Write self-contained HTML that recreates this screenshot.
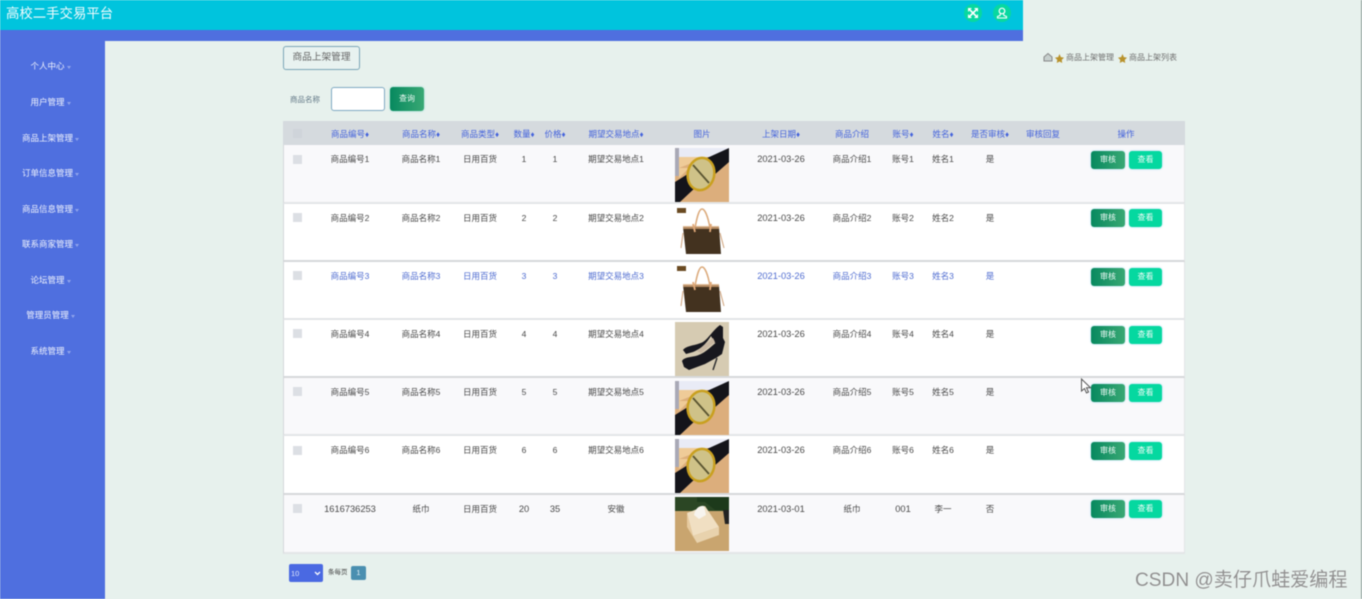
<!DOCTYPE html>
<html lang="zh"><head><meta charset="utf-8"><title>高校二手交易平台</title>
<style>
*{box-sizing:border-box;margin:0;padding:0}
html,body{width:1362px;height:599px;overflow:hidden;background:#e7f1ed;font-family:"Liberation Sans","Noto Sans CJK SC",sans-serif}
#w{position:relative;width:1362px;height:599px;overflow:hidden;filter:blur(.5px)}
.a{position:absolute}
.top{left:0;top:0;width:1023px;height:30px;background:#00c4dd}
.strip{left:0;top:30px;width:1023px;height:11px;background:#4f6fdf}
.side{left:0;top:30px;width:105px;height:569px;background:#4f6fdf}
.title{left:6px;top:4px;font-size:13.4px;line-height:20px;color:#f2fbfd}
.ic{width:18px;height:18px;border-radius:50%;background:#08d8a0;top:4px}
.m{left:-2px;width:105px;text-align:center;font-size:8.5px;line-height:12px;color:#f0f3fd;white-space:nowrap}
.m i{display:inline-block;width:0;height:0;border:2.5px solid transparent;border-top:3px solid #8fa3ec;margin-left:2px;vertical-align:-2px}
.tab{left:283px;top:46px;width:77px;height:24px;border:1px solid #7ba6b8;border-radius:3px;background:#e8f2f0;font-size:9.7px;line-height:22px;text-align:center;color:#666}
.crumb{font-size:8px;line-height:12px;color:#6f6f6f;white-space:nowrap}
.lab{left:290px;top:94px;font-size:7.5px;line-height:12px;color:#5f7584}
.inp{left:331px;top:87px;width:54px;height:24px;background:#fff;border:1px solid #7fa9c2;border-radius:3px}
.q{left:390px;top:87px;width:34px;height:24px;border-radius:3px;background:linear-gradient(90deg,#07895f,#39a874);color:#eef9f4;font-size:8px;line-height:24px;text-align:center;box-shadow:0 0 2px #8fd9d0}
.tb{left:283px;top:121px;width:902px;height:433px;border:1px solid #dfe3e6;border-top:0;background:#fff}
.r{position:absolute;left:283px;width:902px;display:flex;font-size:8.5px;line-height:12px;color:#484848;border-bottom:2px solid #e3e5e7;border-left:1px solid #d5d8db;border-right:1px solid #e3e5e7}
.r>div{text-align:center;padding-top:8px;white-space:nowrap;flex:none}
.c0{width:27px}.c1{width:78px}.c2{width:64px}.c3{width:54px}.c4{width:34px}.c5{width:28px}.c6{width:94px}.c7{width:78px}.c8{width:80px;font-size:9.3px}.c9{width:62px}.c10{width:40px}.c11{width:40px}.c12{width:54px}.c13{width:52px}.c14{width:114px}
.h{top:121px;height:24px;background:#d5dade;color:#4463dc;border:0;font-size:8.5px}
.h>div{padding-top:7px}
.h .c0{margin-left:1px}
.h .c8{font-size:8.5px}
.h b{font-weight:400;font-size:8px;line-height:8px}
.o{background:#f9f9fb}.e{background:#fff}
.blue{color:#4f6cd0}
.cb{width:9px;height:9px;background:#dcdfe4;display:block;margin:0 0 0 9px}
.img{left:675px;width:54px;height:54px;overflow:hidden}
.b1,.b2{width:34px;height:18px;border-radius:3px;color:#f0fbf7;font-size:8px;line-height:18px;text-align:center;box-shadow:0 0 2px #9fd8ee}
.b1{left:1091px;background:linear-gradient(90deg,#07895f,#39a874)}
.b2{left:1129px;width:33px;background:#05d8a0}
.sel{left:289px;top:564px;width:34px;height:18px;border-radius:2px;background:#4a69e2;color:#dfe6fb;font-size:7.500px;line-height:19px;padding-left:2px}
.pg{left:351px;top:566px;width:15px;height:14px;border-radius:2px;background:#4a8fb0;color:#e6f3f8;font-size:7.500px;line-height:14px;text-align:center}
.mark{left:1135px;top:569px;font-size:19.100px;line-height:24px;color:#8f8f8f;white-space:nowrap;text-shadow:0 0 1px #fff}
.edge{left:1361px;top:0;width:1px;height:599px;background:#8b9b95}
</style></head><body><div id="w">
<svg width="0" height="0" style="position:absolute"><defs>
<symbol id="watch" viewBox="0 0 54 54"><rect width="54" height="54" fill="#dcae7c"/><rect width="54" height="9" fill="#e9ebf6"/><rect width="4" height="28" fill="#a9a9b6"/><path d="M4 9H32L4 20Z" fill="#efcb98"/><path d="M32 10L54 0V14L38 28Z" fill="#14141a"/><path d="M0 34L16 24L22 38L5 54H0Z" fill="#14141a"/><path d="M4 20H14L4 30Z" fill="#efcb98"/><ellipse cx="26" cy="26" rx="14.500" ry="17.500" transform="rotate(12 26 26)" fill="#c9a01f"/><ellipse cx="26" cy="26" rx="12" ry="15" transform="rotate(12 26 26)" fill="#cfc288"/><path d="M18 17L34 35" stroke="#5a5430" stroke-width="1.800"/></symbol>
<symbol id="bag" viewBox="0 0 54 54"><rect width="54" height="54" fill="#fff"/><rect x="2" y="2" width="9" height="5" fill="#6a4a22"/><path d="M20 22C22 11 24 3 27 3C30 3 33 11 35 22" fill="none" stroke="#dba97a" stroke-width="1.500"/><path d="M8 21H44L46 48H11Z" fill="#43321f"/><path d="M8 20H44V23H8Z" fill="#dba97a" opacity=".75"/><path d="M8 27L6 42M45 27L49 42" stroke="#cfa27a" stroke-width="1"/><path d="M18 18L20 26M36 18L35 26" stroke="#e0a878" stroke-width="1.800"/></symbol>
<symbol id="shoes" viewBox="0 0 54 54"><rect width="54" height="54" fill="#d6cbb2"/><path d="M8 28C12 23 20 24 28 20C34 16 38 8 45 3L48 5L48 20L40 21L36 14C32 20 28 26 18 30L11 32Z" fill="#17171e"/><path d="M7 39C10 34 18 36 26 32C34 28 40 20 48 16L50 20L47 32L41 36L30 42L14 48L9 45Z" fill="#17171e"/><path d="M22 29L38 16L40 20L26 31Z" fill="#c8b7a2"/><path d="M42 36L38 48" stroke="#2a2a2e" stroke-width="1.400"/></symbol>
<symbol id="tissue" viewBox="0 0 54 54"><rect width="54" height="54" fill="#c9a56f"/><rect width="54" height="14" fill="#2b4624"/><path d="M22 0H54V13H40L30 5H22Z" fill="#1d3a1b"/><path d="M48 13H54V27H50Z" fill="#222"/><path d="M12 16L30 9L44 30L18 39Z" fill="#f0dfc2"/><path d="M12 16L18 39L22 46L12 30Z" fill="#e6ca9f"/><path d="M18 39L44 30V38L22 46Z" fill="#e8d2ad"/><path d="M19 18C20 12 24 8 29 9L31 18L24 22Z" fill="#f7f4ee"/></symbol>
</defs></svg>

<div class="a side"></div><div class="a strip"></div><div class="a top"></div>
<div class="a title">高校二手交易平台</div>
<div class="a ic" style="left:964px"><svg width="18" height="18" viewBox="0 0 18 18"><path d="M5 5L13 13M13 5L5 13" stroke="#fff" stroke-width="1.600"/><path d="M4.500 7.500V4.500H7.500M10.500 4.500H13.500V7.500M13.500 10.500V13.500H10.500M7.500 13.500H4.500V10.500" stroke="#fff" stroke-width="1" fill="none"/></svg></div>
<div class="a ic" style="left:993px"><svg width="18" height="18" viewBox="0 0 18 18"><circle cx="9" cy="7" r="2.800" fill="none" stroke="#fff" stroke-width="1.200"/><path d="M7.500 9.500L7 11.500L4.500 12.500V14H13.500V12.500L11 11.500L10.500 9.500" fill="none" stroke="#fff" stroke-width="1.100"/></svg></div>

<div class="a m" style="top:60px">个人中心<i></i></div>
<div class="a m" style="top:96px">用户管理<i></i></div>
<div class="a m" style="top:132px">商品上架管理<i></i></div>
<div class="a m" style="top:167px">订单信息管理<i></i></div>
<div class="a m" style="top:203px">商品信息管理<i></i></div>
<div class="a m" style="top:238px">联系商家管理<i></i></div>
<div class="a m" style="top:274px">论坛管理<i></i></div>
<div class="a m" style="top:309px">管理员管理<i></i></div>
<div class="a m" style="top:345px">系统管理<i></i></div>

<div class="a tab">商品上架管理</div>
<svg class="a" style="left:1043px;top:52px" width="10" height="10" viewBox="0 0 10 10"><path d="M1 5L5 1.500L9 5V9H1Z" fill="#c6cfcd" stroke="#888" stroke-width="1"/></svg>
<svg class="a" style="left:1055px;top:54px" width="9" height="9" viewBox="0 0 10 10"><path d="M5 0L6.500 3.500L10 4L7.500 6.500L8 10L5 8.300L2 10L2.500 6.500L0 4L3.500 3.500Z" fill="#b8922c"/></svg>
<div class="a crumb" style="left:1066px;top:52px">商品上架管理</div>
<svg class="a" style="left:1118px;top:54px" width="9" height="9" viewBox="0 0 10 10"><path d="M5 0L6.500 3.500L10 4L7.500 6.500L8 10L5 8.300L2 10L2.500 6.500L0 4L3.500 3.500Z" fill="#b8922c"/></svg>
<div class="a crumb" style="left:1129px;top:52px">商品上架列表</div>

<div class="a lab">商品名称</div><div class="a inp"></div><div class="a q">查询</div>

<div class="a tb"></div>
<div class="r h"><div class="c0"><span class="cb" style="margin-top:1px;background:#cfd4da"></span></div><div class="c1">商品编号<b>♦</b></div><div class="c2">商品名称<b>♦</b></div><div class="c3">商品类型<b>♦</b></div><div class="c4">数量<b>♦</b></div><div class="c5">价格<b>♦</b></div><div class="c6">期望交易地点<b>♦</b></div><div class="c7">图片</div><div class="c8">上架日期<b>♦</b></div><div class="c9">商品介绍</div><div class="c10">账号<b>♦</b></div><div class="c11">姓名<b>♦</b></div><div class="c12">是否审核<b>♦</b></div><div class="c13">审核回复</div><div class="c14">操作</div></div>

<div class="r o" style="top:145px;height:59px"><div class="c0"><span class="cb" style="margin-top:2px"></span></div><div class="c1">商品编号1</div><div class="c2">商品名称1</div><div class="c3">日用百货</div><div class="c4">1</div><div class="c5">1</div><div class="c6">期望交易地点1</div><div class="c7"></div><div class="c8">2021-03-26</div><div class="c9">商品介绍1</div><div class="c10">账号1</div><div class="c11">姓名1</div><div class="c12">是</div></div>
<div class="r e" style="top:204px;height:58px;border-bottom-color:#d6d8da"><div class="c0"><span class="cb" style="margin-top:1px"></span></div><div class="c1">商品编号2</div><div class="c2">商品名称2</div><div class="c3">日用百货</div><div class="c4">2</div><div class="c5">2</div><div class="c6">期望交易地点2</div><div class="c7"></div><div class="c8">2021-03-26</div><div class="c9">商品介绍2</div><div class="c10">账号2</div><div class="c11">姓名2</div><div class="c12">是</div></div>
<div class="r e blue" style="top:262px;height:58px"><div class="c0"><span class="cb" style="margin-top:1px"></span></div><div class="c1">商品编号3</div><div class="c2">商品名称3</div><div class="c3">日用百货</div><div class="c4">3</div><div class="c5">3</div><div class="c6">期望交易地点3</div><div class="c7"></div><div class="c8">2021-03-26</div><div class="c9">商品介绍3</div><div class="c10">账号3</div><div class="c11">姓名3</div><div class="c12">是</div></div>
<div class="r e" style="top:320px;height:58px;border-bottom-color:#d6d8da"><div class="c0"><span class="cb" style="margin-top:1px"></span></div><div class="c1">商品编号4</div><div class="c2">商品名称4</div><div class="c3">日用百货</div><div class="c4">4</div><div class="c5">4</div><div class="c6">期望交易地点4</div><div class="c7"></div><div class="c8">2021-03-26</div><div class="c9">商品介绍4</div><div class="c10">账号4</div><div class="c11">姓名4</div><div class="c12">是</div></div>
<div class="r o" style="top:378px;height:58px"><div class="c0"><span class="cb" style="margin-top:1px"></span></div><div class="c1">商品编号5</div><div class="c2">商品名称5</div><div class="c3">日用百货</div><div class="c4">5</div><div class="c5">5</div><div class="c6">期望交易地点5</div><div class="c7"></div><div class="c8">2021-03-26</div><div class="c9">商品介绍5</div><div class="c10">账号5</div><div class="c11">姓名5</div><div class="c12">是</div></div>
<div class="r e" style="top:436px;height:59px;border-bottom-color:#d6d8da"><div class="c0"><span class="cb" style="margin-top:2px"></span></div><div class="c1">商品编号6</div><div class="c2">商品名称6</div><div class="c3">日用百货</div><div class="c4">6</div><div class="c5">6</div><div class="c6">期望交易地点6</div><div class="c7"></div><div class="c8">2021-03-26</div><div class="c9">商品介绍6</div><div class="c10">账号6</div><div class="c11">姓名6</div><div class="c12">是</div></div>
<div class="r o" style="top:495px;height:59px"><div class="c0"><span class="cb" style="margin-top:1px"></span></div><div class="c1" style="font-size:9.300px">1616736253</div><div class="c2">纸巾</div><div class="c3">日用百货</div><div class="c4" style="font-size:9.300px">20</div><div class="c5" style="font-size:9.300px">35</div><div class="c6">安徽</div><div class="c7"></div><div class="c8">2021-03-01</div><div class="c9">纸巾</div><div class="c10" style="font-size:9.300px">001</div><div class="c11">李一</div><div class="c12">否</div></div>

<svg class="a img" style="top:148px" viewBox="0 0 54 54"><use href="#watch"/></svg>
<svg class="a img" style="top:206px" viewBox="0 0 54 54"><use href="#bag"/></svg>
<svg class="a img" style="top:264px" viewBox="0 0 54 54"><use href="#bag"/></svg>
<svg class="a img" style="top:322px" viewBox="0 0 54 54"><use href="#shoes"/></svg>
<svg class="a img" style="top:381px" viewBox="0 0 54 54"><use href="#watch"/></svg>
<svg class="a img" style="top:439px" viewBox="0 0 54 54"><use href="#watch"/></svg>
<svg class="a img" style="top:497px" viewBox="0 0 54 54"><use href="#tissue"/></svg>

<div class="a b1" style="top:151px">审核</div><div class="a b2" style="top:151px">查看</div>
<div class="a b1" style="top:209px">审核</div><div class="a b2" style="top:209px">查看</div>
<div class="a b1" style="top:268px">审核</div><div class="a b2" style="top:268px">查看</div>
<div class="a b1" style="top:326px">审核</div><div class="a b2" style="top:326px">查看</div>
<div class="a b1" style="top:384px">审核</div><div class="a b2" style="top:384px">查看</div>
<div class="a b1" style="top:442px">审核</div><div class="a b2" style="top:442px">查看</div>
<div class="a b1" style="top:500px">审核</div><div class="a b2" style="top:500px">查看</div>

<div class="a sel">10<svg class="a" style="left:25px;top:7px" width="7" height="5" viewBox="0 0 7 5"><path d="M1 1L3.500 3.500L6 1" stroke="#fff" stroke-width="1.300" fill="none"/></svg></div>
<div class="a crumb" style="left:328px;top:567px;font-size:6.500px;color:#444">条每页</div>
<div class="a pg">1</div>

<svg class="a" style="left:1080px;top:378px" width="12" height="17" viewBox="0 0 12 17"><path d="M1.500 1V13L4.500 10.500L6.500 15L8.500 14L6.500 9.800H10.500Z" fill="#fff" stroke="#555" stroke-width="1"/></svg>
<div class="a mark">CSDN @卖仔爪蛙爱编程</div>
<div class="a edge"></div>
</div></body></html>
